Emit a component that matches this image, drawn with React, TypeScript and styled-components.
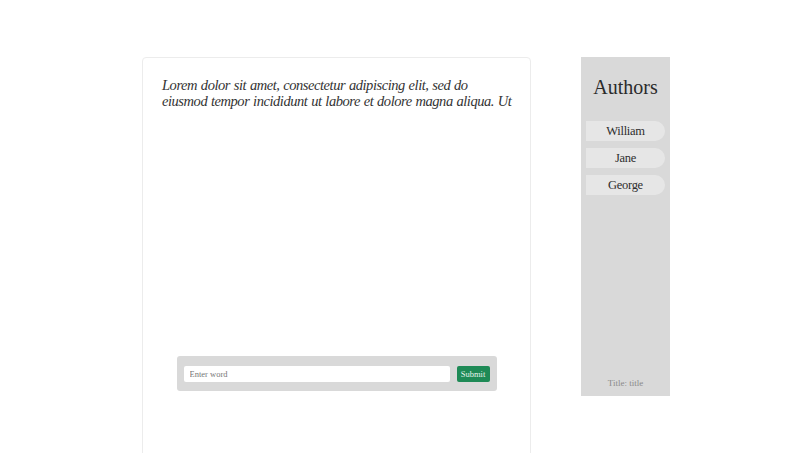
import React from "react";
import styled, { createGlobalStyle } from "styled-components";

const Global = createGlobalStyle`
  html, body { margin: 0; padding: 0; background: #ffffff; }
  body { font-family: "Liberation Serif", "Times New Roman", serif; overflow: hidden; }
`;

const Page = styled.div`
  display: flex;
  align-items: flex-start;
  gap: 50px;
  padding: 57px 0 0 142px;
  height: 453px;
  box-sizing: border-box;
  overflow: hidden;
`;

const Card = styled.main`
  width: 389px;
  height: 420px;
  box-sizing: border-box;
  border: 1px solid #ececec;
  border-radius: 4px;
  padding: 19px 19px 0 19px;
  display: flex;
  flex-direction: column;
  align-items: stretch;
`;

const Paragraph = styled.p`
  margin: 0;
  font-style: italic;
  font-size: 14.5px;
  letter-spacing: -0.45px;
  word-spacing: 0.6px;
  line-height: 16px;
  color: #333333;
  height: 36px;
  white-space: nowrap;
`;

const Form = styled.form`
  margin: 243px auto 0;
  width: 320px;
  height: 35px;
  box-sizing: border-box;
  background: #d9d9d9;
  border-radius: 3px;
  padding: 10px 7px 0 7px;
  display: flex;
  align-items: flex-start;
  gap: 7px;
`;

const Input = styled.input`
  flex: 1;
  height: 16px;
  box-sizing: border-box;
  border: none;
  border-radius: 2px;
  background: #ffffff;
  padding: 0 6px;
  font-family: "Liberation Serif", serif;
  font-size: 8.5px;
  color: #333;
  outline: none;
  &::placeholder { color: #777; }
`;

const Button = styled.button`
  width: 33px;
  height: 16px;
  box-sizing: border-box;
  border: none;
  border-radius: 2px;
  background: #1e8a56;
  color: #e8f3ec;
  font-family: "Liberation Serif", serif;
  font-size: 8.5px;
  padding: 0;
  cursor: pointer;
`;

const Sidebar = styled.aside`
  width: 89px;
  height: 339px;
  background: #d9d9d9;
  box-sizing: border-box;
  padding: 18px 5px 7px 5px;
  display: flex;
  flex-direction: column;
  align-items: stretch;
`;

const Heading = styled.h2`
  margin: 0 0 22px 0;
  font-weight: normal;
  font-size: 20px;
  line-height: 24px;
  text-align: center;
  color: #2b2b2b;
`;

const AuthorList = styled.div`
  display: flex;
  flex-direction: column;
  gap: 7px;
`;

const Pill = styled.div`
  height: 20px;
  line-height: 20px;
  background: #e6e6e6;
  border-radius: 0 10px 10px 0;
  text-align: center;
  font-size: 12.5px;
  letter-spacing: -0.3px;
  color: #2e2e2e;
`;

const Footer = styled.div`
  margin-top: auto;
  text-align: center;
  font-size: 9px;
  line-height: 11px;
  color: #8a8a8a;
`;

const authors = ["William", "Jane", "George"];

export default function App() {
  return (
    <>
      <Global />
      <Page>
        <Card>
          <Paragraph>
            Lorem dolor sit amet, consectetur adipiscing elit, sed do
            <br />
            eiusmod tempor incididunt ut labore et dolore magna aliqua. Ut
          </Paragraph>
          <Form onSubmit={(e) => e.preventDefault()}>
            <Input placeholder="Enter word" />
            <Button type="submit">Submit</Button>
          </Form>
        </Card>
        <Sidebar>
          <Heading>Authors</Heading>
          <AuthorList>
            {authors.map((a) => (
              <Pill key={a}>{a}</Pill>
            ))}
          </AuthorList>
          <Footer>Title: title</Footer>
        </Sidebar>
      </Page>
    </>
  );
}
